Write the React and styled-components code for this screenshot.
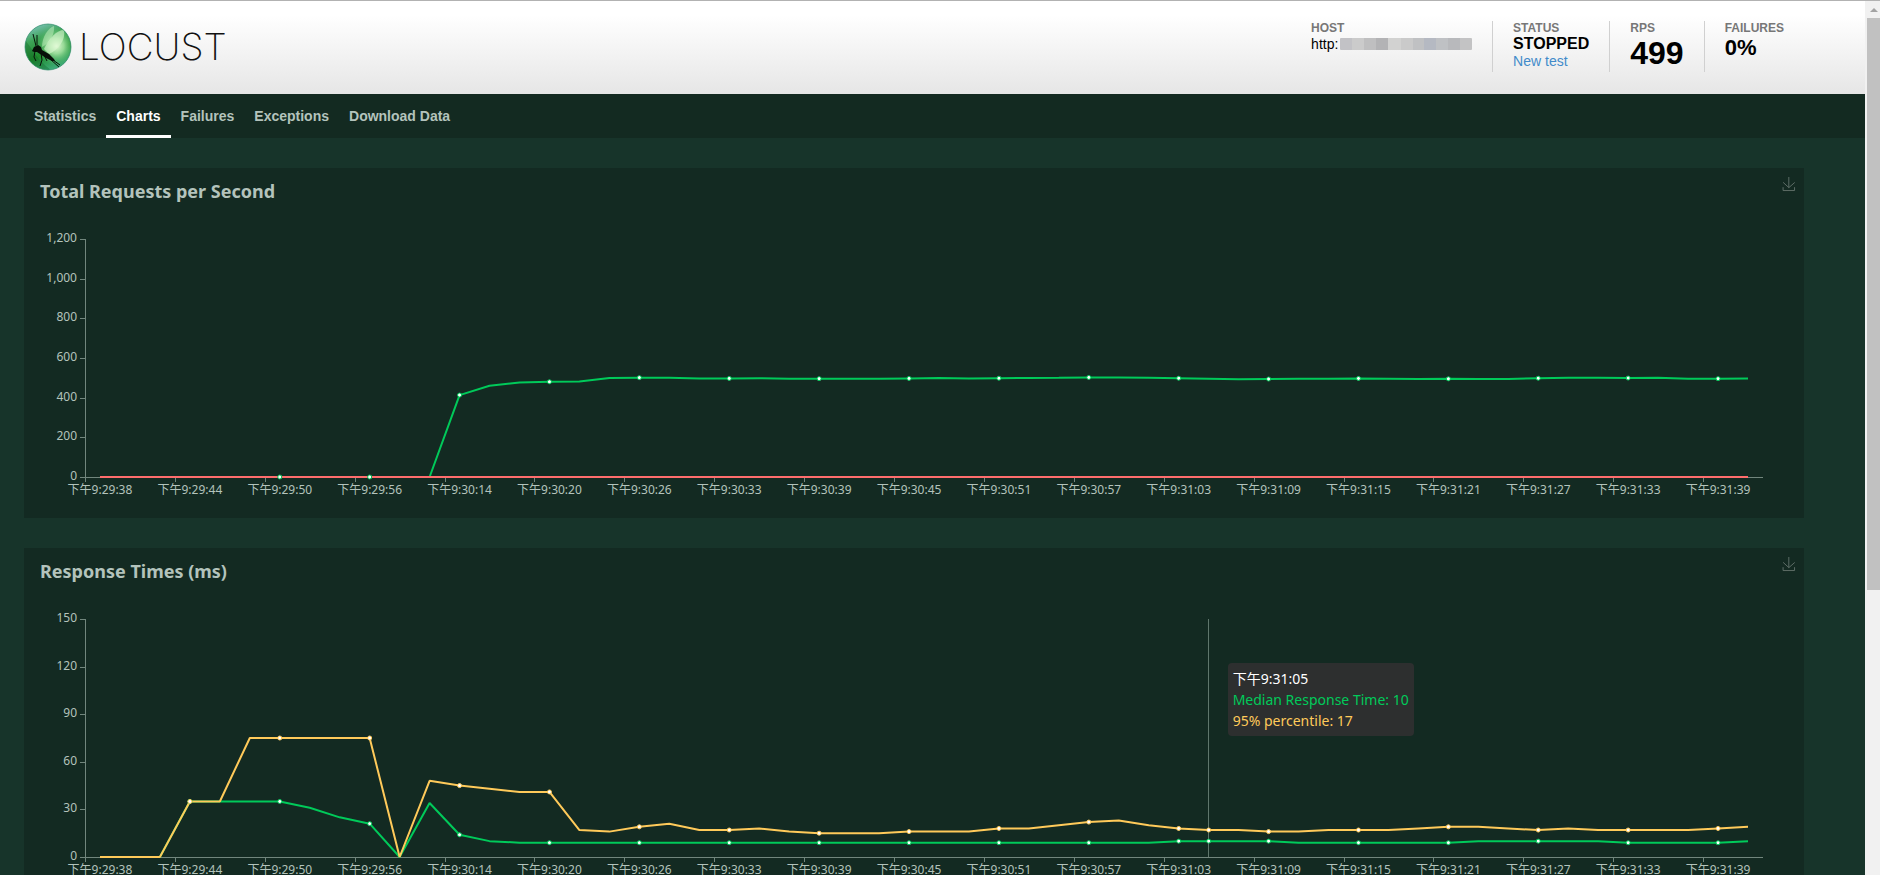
import React, { useLayoutEffect, useRef, useState } from "react";
import styled, { createGlobalStyle } from "styled-components";

const UI_FONT = `"Liberation Sans", Arial, sans-serif`;
const CHART_FONT = `"Noto Sans", "Noto Sans CJK SC", sans-serif`;

const GREEN = "#00ca5a";
const RED = "#ff6d6d";
const YELLOW = "#ffca5a";

const GlobalStyle = createGlobalStyle`
  * { box-sizing: border-box; }
  body {
    margin: 0;
    background: #17342a;
    color: #b3c3bc;
    font-family: ${UI_FONT};
    font-size: 14px;
  }
`;

const Window = styled.div`
  display: flex;
  height: 100vh;
  overflow: hidden;
  border-top: 1px solid #b2b2b2;
`;

const Page = styled.div`
  flex: 1;
  min-width: 0;
  overflow: hidden;
`;

const Header = styled.header`
  display: flex;
  justify-content: space-between;
  align-items: flex-start;
  height: 93px;
  padding: 0 61px 0 24px;
  background: linear-gradient(#ffffff 15%, #e6e6e6);
`;

const Brand = styled.a`
  display: flex;
  align-items: center;
  gap: 6px;
  margin-top: 22px;
  color: #111;
  text-decoration: none;
`;

const Wordmark = styled.span`
  padding-bottom: 2px;
  font-family: Inter, sans-serif;
  font-weight: 200;
  font-size: 37px;
  line-height: 46px;
`;

const Stats = styled.dl`
  display: flex;
  margin: 20px 0 0;
`;

const Stat = styled.div`
  height: 51px;
  padding: 0 20px;
  border-right: 1px solid #d0d0d0;
  color: #000;
  &:last-child { border-right: 0; }
`;

const StatLabel = styled.dt`
  color: #777;
  font-size: 12px;
  font-weight: bold;
  line-height: 14px;
`;

const StatValue = styled.dd`
  margin: 0;
  font-size: ${(p) => p.$size}px;
  font-weight: ${(p) => (p.$plain ? "normal" : "bold")};
  line-height: ${(p) => p.$line}px;
`;

const HostValue = styled.span`
  display: flex;
  align-items: center;
  width: 161px;
`;

const Mosaic = styled.span`
  flex: 1;
  height: 12px;
  margin-left: 2px;
  border-radius: 1px;
  background: linear-gradient(
    90deg,
    #c2c2c6 0 9%, #cbcbcb 9% 18%, #bfbfc0 18% 27%, #b3b3b5 27% 36%,
    #d2d2d1 36% 46%, #cacaca 46% 55%, #c0c1c3 55% 64%, #b5b9c2 64% 73%,
    #bfc1c4 73% 82%, #b8b9bc 82% 91%, #c3c3c4 91%
  );
`;

const NewTest = styled.a`
  display: block;
  color: #428bca;
  font-size: 14px;
  font-weight: normal;
  line-height: 16px;
  text-decoration: none;
`;

const Nav = styled.nav`
  display: flex;
  height: 44px;
  padding-left: 24px;
  background: #132a21;
`;

const Tab = styled.a`
  padding: 0 10px;
  border-bottom: 3px solid ${(p) => (p.$active ? "#fff" : "transparent")};
  color: ${(p) => (p.$active ? "#fff" : "#b3c3bc")};
  font-weight: bold;
  line-height: 44px;
  text-decoration: none;
`;

const Charts = styled.main`
  display: flex;
  flex-direction: column;
  gap: 30px;
  padding: 30px 61px 30px 24px;
`;

const Panel = styled.section`
  position: relative;
  background: #132a22;
`;

const PanelHeader = styled.div`
  display: flex;
  justify-content: space-between;
  align-items: flex-start;
  height: 50px;
  padding: 8px 8px 0 16px;
`;

const PanelTitle = styled.h2`
  margin: 0;
  color: #b3c3bc;
  font-family: ${CHART_FONT};
  font-size: 18px;
  font-weight: bold;
  line-height: 30px;
`;

const SaveButton = styled.button`
  display: flex;
  padding: 0;
  border: 0;
  background: none;
  color: #62716b;
`;

const Plot = styled.svg`
  display: block;
  width: 100%;
  height: 300px;
  font-family: ${CHART_FONT};
  font-size: 12px;
  fill: #b3c3bc;
`;

const Tooltip = styled.div`
  position: absolute;
  top: 115px;
  padding: 5px;
  border-radius: 4px;
  background: #2d2f2f;
  color: #fff;
  font-family: ${CHART_FONT};
  font-size: 14px;
  line-height: 21px;
  white-space: nowrap;
`;

const TooltipLine = styled.div`
  color: ${(p) => p.$color};
`;

const Scrollbar = styled.div`
  display: flex;
  flex-direction: column;
  align-items: stretch;
  width: 15px;
  padding-left: 2px;
  background: #f1f1f1;
`;

const ScrollArrow = styled.div`
  display: flex;
  justify-content: center;
  padding-top: 7px;
  height: 17px;
`;

const ScrollThumb = styled.div`
  height: 65.4%;
  background: #c1c1c1;
`;

const fill = (n, v) => Array(n).fill(v);

const RPS = [
  ...fill(12, 0), 413, 460, 476, 480, 482, 499, 501, 501, 497, 497, 498, 496,
  496, 495, 495, 497, 499, 497, 498, 499, 500, 502, 502, 500, 498, 496, 493,
  494, 495, 496, 497, 496, 494, 495, 494, 494, 498, 500, 501, 499, 500, 495,
  496, 497,
];

const MEDIAN = [
  0, 0, 0, 35, 35, 35, 35, 31, 25, 21, 0, 34, 14, 10, ...fill(22, 9),
  ...fill(4, 10), ...fill(6, 9), ...fill(5, 10), ...fill(4, 9), 10,
];

const P95 = [
  0, 0, 0, 35, 35, 75, 75, 75, 75, 75, 0, 48, 45, 43, 41, 41, 17, 16, 19, 21,
  17, 17, 18, 16, 15, 15, 15, 16, 16, 16, 18, 18, 20, 22, 23, 20, 18, 17, 17,
  16, 16, 17, 17, 17, 18, 19, 19, 18, 17, 18, 17, 17, 17, 17, 18, 19,
];

const TIMES = [
  "9:29:38", "9:29:44", "9:29:50", "9:29:56", "9:30:14", "9:30:20", "9:30:26",
  "9:30:33", "9:30:39", "9:30:45", "9:30:51", "9:30:57", "9:31:03", "9:31:09",
  "9:31:15", "9:31:21", "9:31:27", "9:31:33", "9:31:39",
];

const COUNT = 56;
const LEFT = 61;
const RIGHT = 41;
const TOP = 21;
const BOTTOM = 259;

function LineChart({ title, max, step, series, hover }) {
  const ref = useRef(null);
  const [width, setWidth] = useState(1200);

  useLayoutEffect(() => {
    const measure = () => setWidth(ref.current.clientWidth);
    measure();
    const observer = new ResizeObserver(measure);
    observer.observe(ref.current);
    return () => observer.disconnect();
  }, []);

  const band = (width - LEFT - RIGHT) / COUNT;
  const x = (i) => LEFT + (i + 0.5) * band;
  const y = (v) => BOTTOM - (v / max) * (BOTTOM - TOP);
  const crisp = (n) => Math.round(n) + 0.5;
  const levels = Array.from({ length: max / step + 1 }, (_, i) => i * step);

  return (
    <Panel ref={ref}>
      <PanelHeader>
        <PanelTitle>{title}</PanelTitle>
        <SaveButton type="button" aria-label={`Save ${title} as image`}>
          <svg width="14" height="16" viewBox="0 -2 60 64" fill="none" stroke="currentColor" strokeWidth="4">
            <path d="M4.7 22.9L29.3 45.5L54.7 23.4M4.6 43.6V58H53.8V43.6M29.2 45.1V0" />
          </svg>
        </SaveButton>
      </PanelHeader>
      <Plot role="img" aria-label={title}>
        <g stroke="#71867d">
          <path
            d={`M${LEFT + 0.5} ${TOP}V${BOTTOM + 0.5}H${width - RIGHT}`}
            fill="none"
          />
          {levels.map((v) => (
            <path key={v} d={`M${LEFT - 5} ${crisp(y(v))}h5`} />
          ))}
          {TIMES.map((t, i) => (
            <path key={t} d={`M${crisp(LEFT + i * 3 * band)} ${BOTTOM}v5`} />
          ))}
        </g>
        {levels.map((v) => (
          <text key={v} x={LEFT - 8} y={y(v) + 3} textAnchor="end">
            {v.toLocaleString("en-US")}
          </text>
        ))}
        {TIMES.map((t, i) => (
          <text key={t} x={x(i * 3)} y={BOTTOM + 17} textAnchor="middle">
            下午{t}
          </text>
        ))}
        {hover && (
          <path d={`M${crisp(x(hover.index) - 1)} ${TOP}V${BOTTOM}`} stroke="#5f766c" />
        )}
        {series.map((s) => (
          <polyline
            key={s.name}
            points={s.data.map((v, i) => `${x(i)},${y(v)}`).join(" ")}
            fill="none"
            stroke={s.color}
            strokeWidth="2"
            strokeLinejoin="bevel"
          />
        ))}
        {series.map((s) =>
          s.data.map((v, i) =>
            (i % 3 === 0 && i >= s.firstDot) || (hover && hover.index === i) ? (
              <circle key={s.name + i} cx={x(i)} cy={y(v)} r="2" fill="#fff" stroke={s.color} />
            ) : null
          )
        )}
      </Plot>
      {hover && (
        <Tooltip style={{ left: x(hover.index) + 19 }}>
          <TooltipLine>下午{hover.time}</TooltipLine>
          {series.map((s) => (
            <TooltipLine key={s.name} $color={s.color}>
              {s.name}: {s.data[hover.index]}
            </TooltipLine>
          ))}
        </Tooltip>
      )}
    </Panel>
  );
}

function LocustLogo() {
  return (
    <svg width="49" height="49" viewBox="0 0 49 49" aria-hidden="true">
      <defs>
        <linearGradient id="orb" x1="0.2" y1="0" x2="0.6" y2="1">
          <stop offset="0" stopColor="#7fc4c0" />
          <stop offset="0.3" stopColor="#3fa458" />
          <stop offset="0.65" stopColor="#1f8a2c" />
          <stop offset="1" stopColor="#3fae7c" />
        </linearGradient>
        <radialGradient id="glow" cx="0.68" cy="0.48" r="0.42">
          <stop offset="0" stopColor="#e9fbdc" />
          <stop offset="0.4" stopColor="#b2ecae" stopOpacity="0.8" />
          <stop offset="1" stopColor="#5cc472" stopOpacity="0" />
        </radialGradient>
        <clipPath id="orbClip">
          <circle cx="24" cy="24" r="23" />
        </clipPath>
      </defs>
      <circle cx="24" cy="24" r="23" fill="url(#orb)" />
      <circle cx="24" cy="24" r="23" fill="url(#glow)" />
      <g clipPath="url(#orbClip)">
        <path d="M18 24C18 14 24 5 30 3C31 11 26 20 18 24Z" fill="#c9f3c4" opacity="0.5" />
        <path d="M20 26C25 15 33 7 40 7C42 17 34 27 25 31Z" fill="#dcf8d2" opacity="0.6" />
        <path d="M1 17C8 25 12 36 27 47H8L0 34Z" fill="#0b5a20" opacity="0.3" />
        <path
          d="M8 28L10 24L14 22L17 24L18 27L25 31L30 36L31 38L28 38L22 35L16 31L13 29L10 29Z"
          fill="#071008"
        />
        <path
          d="M12 23L9 11M13 22L13 12M11 28L10 34L12 38M17 30L18 37L16 43M20 32L23 38M26 36L35 44M29 37L36 42"
          fill="none"
          stroke="#071008"
        />
      </g>
      <circle cx="24" cy="24" r="23" fill="none" stroke="#2c8a68" strokeOpacity="0.7" />
    </svg>
  );
}

const TABS = ["Statistics", "Charts", "Failures", "Exceptions", "Download Data"];

export default function App() {
  return (
    <Window>
      <GlobalStyle />
      <Page>
        <Header>
          <Brand href="#" aria-label="Locust">
            <LocustLogo />
            <Wordmark>LOCUST</Wordmark>
          </Brand>
          <Stats>
            <Stat>
              <StatLabel>HOST</StatLabel>
              <StatValue $size={14} $line={18} $plain>
                <HostValue>
                  http:
                  <Mosaic />
                </HostValue>
              </StatValue>
            </Stat>
            <Stat>
              <StatLabel>STATUS</StatLabel>
              <StatValue $size={16} $line={18}>
                STOPPED
                <NewTest href="#new-test">New test</NewTest>
              </StatValue>
            </Stat>
            <Stat>
              <StatLabel>RPS</StatLabel>
              <StatValue $size={32} $line={36}>499</StatValue>
            </Stat>
            <Stat>
              <StatLabel>FAILURES</StatLabel>
              <StatValue $size={22} $line={26}>0%</StatValue>
            </Stat>
          </Stats>
        </Header>
        <Nav>
          {TABS.map((tab) => (
            <Tab key={tab} href="#" $active={tab === "Charts"}>
              {tab}
            </Tab>
          ))}
        </Nav>
        <Charts>
          <LineChart
            title="Total Requests per Second"
            max={1200}
            step={200}
            series={[
              { name: "RPS", color: GREEN, data: RPS, firstDot: 6 },
              { name: "Failures", color: RED, data: fill(COUNT, 0), firstDot: COUNT },
            ]}
          />
          <LineChart
            title="Response Times (ms)"
            max={150}
            step={30}
            series={[
              { name: "Median Response Time", color: GREEN, data: MEDIAN, firstDot: 3 },
              { name: "95% percentile", color: YELLOW, data: P95, firstDot: 3 },
            ]}
            hover={{ index: 37, time: "9:31:05" }}
          />
        </Charts>
      </Page>
      <Scrollbar aria-hidden="true">
        <ScrollArrow>
          <svg width="8" height="4" viewBox="0 0 8 4" fill="#a3a3a3">
            <path d="M4 0L8 4H0Z" />
          </svg>
        </ScrollArrow>
        <ScrollThumb />
      </Scrollbar>
    </Window>
  );
}
